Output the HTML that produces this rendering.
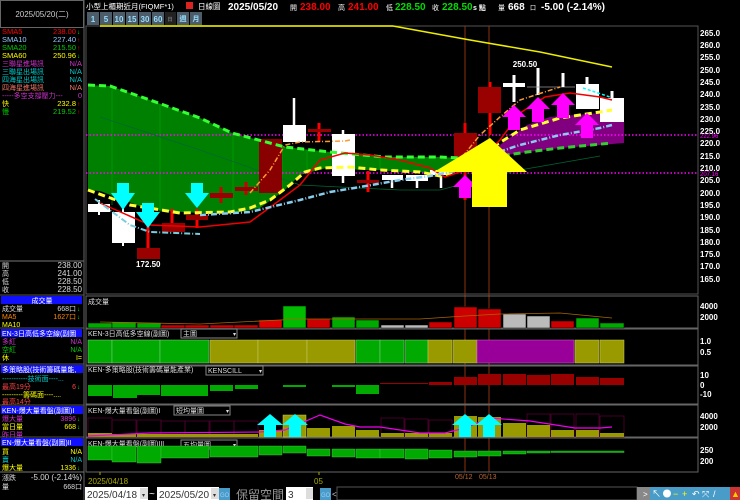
<!DOCTYPE html>
<html><head><meta charset="utf-8"><style>
html,body{margin:0;padding:0;background:#000;width:740px;height:500px;overflow:hidden}
svg{display:block}
text{font-family:"Liberation Sans","Noto Sans CJK TC",sans-serif}
.b{font-weight:bold}
</style></head><body>
<svg width="740" height="500" viewBox="0 0 740 500" xmlns="http://www.w3.org/2000/svg" font-size="8">
<rect width="740" height="500" fill="#000"/>
<rect x="0.5" y="0.5" width="83" height="27" fill="#000" stroke="#666"/>
<text x="42" y="17" fill="#ccc" text-anchor="middle">2025/05/20(二)</text>
<line x1="84" y1="0" x2="84" y2="500" stroke="#666"/>
<g font-size="7.5">
<text x="2" y="34" fill="#f00">SMA5</text><text x="76" y="34" fill="#f00" text-anchor="end">238.00</text><text x="77" y="34" fill="#0f0" font-size="6">↓</text>
<text x="2" y="42" fill="#9cf">SMA10</text><text x="76" y="42" fill="#9cf" text-anchor="end">227.40</text><text x="77" y="42" fill="#f00" font-size="6">↑</text>
<text x="2" y="50" fill="#0c0">SMA20</text><text x="76" y="50" fill="#0c0" text-anchor="end">215.50</text><text x="77" y="50" fill="#f00" font-size="6">↑</text>
<text x="2" y="58" fill="#ff0">SMA60</text><text x="76" y="58" fill="#ff0" text-anchor="end">250.96</text><text x="77" y="58" fill="#0f0" font-size="6">↓</text>
<text x="2" y="66" fill="#c3c" font-size="7">三聯星進場訊</text><text x="82" y="66" fill="#c3c" text-anchor="end">N/A</text>
<text x="2" y="74" fill="#0cc" font-size="7">三聯星出場訊</text><text x="82" y="74" fill="#0cc" text-anchor="end">N/A</text>
<text x="2" y="82" fill="#0cc" font-size="7">四海星出場訊</text><text x="82" y="82" fill="#0cc" text-anchor="end">N/A</text>
<text x="2" y="90" fill="#e76" font-size="7">四海星進場訊</text><text x="82" y="90" fill="#e76" text-anchor="end">N/A</text>
<text x="2" y="98" fill="#c3c" font-size="7">-----多空支撐壓力---</text><text x="82" y="98" fill="#c3c" text-anchor="end">0</text>
<text x="2" y="106" fill="#ff0" font-size="7">快</text><text x="76" y="106" fill="#ff0" text-anchor="end">232.8</text><text x="77" y="106" fill="#f00" font-size="6">↑</text>
<text x="2" y="114" fill="#0c0" font-size="7">慢</text><text x="76" y="114" fill="#0c0" text-anchor="end">219.52</text><text x="77" y="114" fill="#f00" font-size="6">↑</text>
</g>
<line x1="0" y1="261" x2="84" y2="261" stroke="#777"/>
<g font-size="7">
<text x="2" y="268" fill="#ddd">開</text><text x="82" y="268" fill="#ddd" text-anchor="end" font-size="8">238.00</text>
<text x="2" y="276" fill="#ddd">高</text><text x="82" y="276" fill="#ddd" text-anchor="end" font-size="8">241.00</text>
<text x="2" y="284" fill="#ddd">低</text><text x="82" y="284" fill="#ddd" text-anchor="end" font-size="8">228.50</text>
<text x="2" y="292" fill="#ddd">收</text><text x="82" y="292" fill="#ddd" text-anchor="end" font-size="8">228.50</text>
<rect x="1" y="296" width="81" height="8" fill="#1010ff"/><text x="42" y="303" fill="#fff" text-anchor="middle">成交量</text>
<text x="2" y="311" fill="#ddd">成交量</text><text x="76" y="311" fill="#ddd" text-anchor="end">668口</text><text x="77" y="311" fill="#0f0" font-size="6">↓</text>
<text x="2" y="319" fill="#f80">MA5</text><text x="76" y="319" fill="#f80" text-anchor="end">1627口</text><text x="77" y="319" fill="#0f0" font-size="6">↓</text>
<text x="2" y="327" fill="#ff0">MA10</text>
<rect x="1" y="329" width="81" height="8" fill="#1010ff"/><text x="2" y="336" fill="#fff">EN-3日高低多空線(副圖</text>
<text x="2" y="344" fill="#c3c">多紅</text><text x="82" y="344" fill="#c3c" text-anchor="end">N/A</text>
<text x="2" y="352" fill="#0c0">空紅</text><text x="82" y="352" fill="#0c0" text-anchor="end">N/A</text>
<text x="2" y="360" fill="#ff0">休</text><text x="82" y="360" fill="#ff0" text-anchor="end">I=</text>
<rect x="1" y="365" width="82" height="8" fill="#1010ff"/><text x="2" y="372" fill="#fff">多策略股(技術籌碼量能,</text>
<text x="2" y="381" fill="#0cc">-----------技術面----...</text>
<text x="2" y="389" fill="#f44">最高19分</text><text x="76" y="389" fill="#f44" text-anchor="end">6</text><text x="77" y="389" fill="#0f0" font-size="6">↓</text>
<text x="2" y="397" fill="#ff0">---------籌碼面----....</text>
<text x="2" y="404" fill="#f44">最高14分</text>
<rect x="1" y="406" width="82" height="8" fill="#1010ff"/><text x="2" y="413" fill="#fff">KEN-爆大量看盤(副圖)I</text>
<text x="2" y="421" fill="#c3c">爆大量</text><text x="76" y="421" fill="#c3c" text-anchor="end">3896</text><text x="77" y="421" fill="#0f0" font-size="6">↓</text>
<text x="2" y="429" fill="#ff0">當日量</text><text x="76" y="429" fill="#ff0" text-anchor="end">668</text><text x="77" y="429" fill="#0f0" font-size="6">↓</text>
<text x="2" y="437" fill="#c3c">昨日量</text>
<rect x="1" y="438" width="82" height="8" fill="#1010ff"/><text x="2" y="445" fill="#fff">EN-爆大量看盤(副圖)II</text>
<text x="2" y="454" fill="#ff0">買</text><text x="82" y="454" fill="#ff0" text-anchor="end">N/A</text>
<text x="2" y="462" fill="#0cc">賣</text><text x="82" y="462" fill="#0cc" text-anchor="end">N/A</text>
<text x="2" y="470" fill="#ff0">爆大量</text><text x="76" y="470" fill="#ff0" text-anchor="end">1336</text><text x="77" y="470" fill="#0f0" font-size="6">↓</text>
<text x="2" y="480" fill="#ddd">漲跌</text><text x="82" y="480" fill="#ddd" text-anchor="end" font-size="8">-5.00 (-2.14%)</text>
<text x="2" y="489" fill="#ddd">量</text><text x="82" y="489" fill="#ddd" text-anchor="end">668口</text>
</g>
<line x1="0" y1="472" x2="84" y2="472" stroke="#777"/>
<g stroke="#555"><line x1="0" y1="295" x2="84" y2="295"/><line x1="0" y1="328" x2="84" y2="328"/><line x1="0" y1="364" x2="84" y2="364"/><line x1="0" y1="405" x2="84" y2="405"/><line x1="0" y1="437" x2="84" y2="437"/></g>

<!-- header -->
<text x="86" y="9" fill="#fff" font-size="7.5">小型上櫃期近月(FIQMF*1)</text>
<rect x="186" y="2" width="7" height="7" fill="#d22"/>
<text x="198" y="9" fill="#fff" font-size="7.5">日線圖</text>
<text x="228" y="10" fill="#fff" class="b" font-size="10">2025/05/20</text>
<text x="290" y="10" fill="#fff" font-size="7">開</text><text x="300" y="10" fill="#f00" class="b" font-size="10">238.00</text>
<text x="338" y="10" fill="#fff" font-size="7">高</text><text x="348" y="10" fill="#f00" class="b" font-size="10">241.00</text>
<text x="386" y="10" fill="#fff" font-size="7">低</text><text x="395" y="10" fill="#0d0" class="b" font-size="10">228.50</text>
<text x="432" y="10" fill="#fff" font-size="7">收</text><text x="442" y="10" fill="#0d0" class="b" font-size="10">228.50</text>
<text x="473" y="10" fill="#fff" class="b" font-size="7">s 點</text>
<text x="498" y="10" fill="#fff" font-size="7">量</text><text x="508" y="10" fill="#fff" class="b" font-size="10">668</text><text x="530" y="10" fill="#fff" font-size="6">口</text>
<text x="541" y="10" fill="#fff" class="b" font-size="10">-5.00 (-2.14%)</text>
<g font-size="8" fill="#9df" class="b">
<rect x="87" y="12" width="12" height="13" fill="#4c5c68"/><text x="93" y="22" text-anchor="middle">1</text>
<rect x="100" y="12" width="12" height="13" fill="#4c5c68"/><text x="106" y="22" text-anchor="middle">5</text>
<rect x="113" y="12" width="12" height="13" fill="#4c5c68"/><text x="119" y="22" text-anchor="middle">10</text>
<rect x="126" y="12" width="12" height="13" fill="#4c5c68"/><text x="132" y="22" text-anchor="middle">15</text>
<rect x="139" y="12" width="12" height="13" fill="#4c5c68"/><text x="145" y="22" text-anchor="middle">30</text>
<rect x="152" y="12" width="12" height="13" fill="#4c5c68"/><text x="158" y="22" text-anchor="middle">60</text>
<rect x="165" y="12" width="11" height="13" fill="#222"/><text x="170" y="21" text-anchor="middle" fill="#777" font-size="5">日</text>
<rect x="177" y="12" width="12" height="13" fill="#4c5c68"/><text x="183" y="21" text-anchor="middle" font-size="7">週</text>
<rect x="190" y="12" width="12" height="13" fill="#4c5c68"/><text x="196" y="21" text-anchor="middle" font-size="7">月</text>
</g>
<rect x="86" y="26" width="612" height="268" fill="none" stroke="#555"/>
<line x1="100" y1="26" x2="393" y2="26" stroke="#ff0" stroke-width="1.5"/>

<polygon points="88,85 110,86 150,100 200,118 232,133 285,147 330,152 385,157 440,157 460,158 470,160 450,170 440,175 420,172 400,172 380,170 360,170 330,167 300,175 285,190 260,208 240,212 200,213 150,210 100,191 88,190" fill="#008000"/>
<g stroke="#0a0" stroke-width="0.6"><line x1="112" y1="87" x2="112" y2="205"/><line x1="160" y1="104" x2="160" y2="212"/><line x1="233" y1="133" x2="233" y2="212"/><line x1="282" y1="146" x2="282" y2="192"/><line x1="307" y1="150" x2="307" y2="172"/><line x1="380" y1="157" x2="380" y2="170"/></g>
<polygon points="478,160 500,145 527,125 550,117 575,115 600,113 624,113 624,143 600,145 560,148 527,152 500,156 478,160" fill="#800080"/>
<line x1="86" y1="135" x2="698" y2="135" stroke="#f0f" stroke-width="1.5" stroke-dasharray="1.5,2"/>
<line x1="86" y1="173" x2="698" y2="173" stroke="#f0f" stroke-width="1.5" stroke-dasharray="1.5,2"/>
<line x1="465" y1="26" x2="465" y2="472" stroke="#8b3010" stroke-width="1"/>
<line x1="489" y1="26" x2="489" y2="472" stroke="#8b3010" stroke-width="1"/>
<polyline points="393,26 470,40 540,52 612,67" fill="none" stroke="#ee0" stroke-width="1.5"/>
<polyline points="100,117 200,150 300,185 400,190 440,190 470,182 520,170 560,163 600,156" fill="none" stroke="#063" stroke-width="0.8"/>
<g>
<rect x="88" y="204" width="22" height="8" fill="#fff"/><line x1="99" y1="200" x2="99" y2="215" stroke="#fff" stroke-width="2"/>
<line x1="123" y1="205" x2="123" y2="246" stroke="#fff" stroke-width="2"/><rect x="112" y="212" width="23" height="31" fill="#fff"/>
<line x1="148" y1="225" x2="148" y2="250" stroke="#f00" stroke-width="3"/><rect x="137" y="248" width="23" height="11" fill="#900"/>
<line x1="172" y1="209" x2="172" y2="224" stroke="#f00" stroke-width="3"/><rect x="162" y="223" width="23" height="9" fill="#900"/>
<line x1="197" y1="209" x2="197" y2="228" stroke="#f00" stroke-width="3"/><rect x="186" y="215" width="22" height="5" fill="#900"/>
<line x1="221" y1="187" x2="221" y2="203" stroke="#c00" stroke-width="3"/><rect x="210" y="193" width="23" height="5" fill="#900"/>
<line x1="246" y1="182" x2="246" y2="195" stroke="#c00" stroke-width="3"/><rect x="235" y="187" width="23" height="4" fill="#900"/>
<rect x="259" y="139" width="23" height="54" fill="#800"/>
<line x1="294" y1="98" x2="294" y2="128" stroke="#fff" stroke-width="2.5"/><rect x="283" y="125" width="23" height="17" fill="#fff"/>
<line x1="319" y1="123" x2="319" y2="142" stroke="#f00" stroke-width="3"/><rect x="308" y="129" width="23" height="3" fill="#900"/>
<line x1="343" y1="130" x2="343" y2="183" stroke="#fff" stroke-width="2.5"/><rect x="332" y="134" width="23" height="42" fill="#fff"/>
<line x1="368" y1="171" x2="368" y2="192" stroke="#f00" stroke-width="3"/><rect x="357" y="180" width="22" height="3" fill="#900"/>
<line x1="392" y1="175" x2="392" y2="188" stroke="#fff" stroke-width="2.5"/><rect x="382" y="175" width="21" height="5" fill="#fff"/>
<line x1="417" y1="175" x2="417" y2="188" stroke="#fff" stroke-width="2.5"/><rect x="406" y="175" width="22" height="6" fill="#fff"/>
<line x1="441" y1="170" x2="441" y2="188" stroke="#fff" stroke-width="2.5"/><rect x="430" y="170" width="22" height="5" fill="#fff"/>
<line x1="465" y1="123" x2="465" y2="200" stroke="#e00" stroke-width="3"/><rect x="454" y="133" width="23" height="24" fill="#900"/>
<line x1="490" y1="82" x2="490" y2="135" stroke="#f00" stroke-width="3"/><rect x="478" y="87" width="23" height="26" fill="#900"/>
<line x1="514" y1="75" x2="514" y2="102" stroke="#fff" stroke-width="3"/><rect x="503" y="83" width="22" height="4" fill="#fff"/>
<line x1="538" y1="68" x2="538" y2="95" stroke="#fff" stroke-width="3"/><line x1="527" y1="87" x2="575" y2="87" stroke="#999" stroke-width="0.7"/>
<line x1="563" y1="73" x2="563" y2="87" stroke="#fff" stroke-width="3"/>
<line x1="587" y1="77" x2="587" y2="86" stroke="#fff" stroke-width="3"/><rect x="576" y="84" width="23" height="25" fill="#fff"/>
<line x1="612" y1="91" x2="612" y2="99" stroke="#fff" stroke-width="3"/><rect x="600" y="98" width="24" height="24" fill="#fff"/>
</g>
<text x="136" y="267" fill="#fff" class="b">172.50</text>
<text x="525" y="67" fill="#fff" class="b" text-anchor="middle">250.50</text>
<polyline points="88,85 110,86 150,100 200,118 232,133 285,147 330,152 385,157 440,157 460,158 470,160" fill="none" stroke="#3f3" stroke-width="3" stroke-dasharray="7,4"/>
<polyline points="470,160 500,156 527,152 560,148 612,143" fill="none" stroke="#3c3" stroke-width="3" stroke-dasharray="7,4"/>
<polyline points="88,190 130,205 180,213 230,212 250,208 270,200 290,185 305,172 320,168 350,167 380,170 420,172 440,176 455,172 480,155 520,130 560,118 600,112 612,110" fill="none" stroke="#ff3" stroke-width="3" stroke-dasharray="7,4"/>
<polyline points="100,203 150,225 200,227 250,222 280,200 300,185 320,160 345,153 370,155 400,160 430,168 445,177 460,172 480,160 500,140 520,113 545,97 570,93 600,97 612,100" fill="none" stroke="#e00" stroke-width="1.5"/>
<polyline points="95,199 130,225 150,232 200,234" fill="none" stroke="#7cd" stroke-width="2" stroke-dasharray="6,2,1,2"/>
<polyline points="200,215 250,212 300,200 330,192 360,187 400,180 430,176 460,170 480,158 520,145 560,135 600,128 612,125" fill="none" stroke="#8ce" stroke-width="2.5" stroke-dasharray="6,2,1,2"/>
<polyline points="250,193 270,170 285,145 300,142 345,141 350,140" fill="none" stroke="#f93" stroke-width="1.5" stroke-dasharray="5,2,1,2"/>
<polyline points="450,172 480,135 500,117 520,100 560,87" fill="none" stroke="#f93" stroke-width="1.5" stroke-dasharray="5,2,1,2"/>
<polyline points="583,88 610,97" fill="none" stroke="#0ff" stroke-width="1.5" stroke-dasharray="3,2"/>
<g fill="#0ff">
<polygon points="117,183 129,183 129,193 135,193 123,210 111,193 117,193"/>
<polygon points="142,203 154,203 154,212 160,212 148,228 136,212 142,212"/>
<polygon points="191,183 203,183 203,193 209,193 197,208 185,193 191,193"/>
</g>
<g fill="#f0f">
<polygon points="465,175 477,187 471,187 471,198 459,198 459,187 453,187"/>
<polygon points="514,105 526,117 520,117 520,130 508,130 508,117 502,117"/>
<polygon points="538,97 550,109 544,109 544,122 532,122 532,109 526,109"/>
<polygon points="563,93 575,105 569,105 569,118 557,118 557,105 551,105"/>
<polygon points="587,113 599,125 593,125 593,138 581,138 581,125 575,125"/>
</g>
<polygon points="490,138 527,172 507,172 507,207 472,207 472,172 434,172" fill="#ff0"/>
<g fill="#fff" class="b" font-size="8">
<text x="700" y="36">265.0</text><text x="700" y="48">260.0</text><text x="700" y="60">255.0</text><text x="700" y="73">250.0</text><text x="700" y="85">245.0</text><text x="700" y="97">240.0</text><text x="700" y="110">235.0</text><text x="700" y="122">230.0</text><text x="700" y="134">225.0</text><text x="700" y="146">220.0</text><text x="700" y="159">215.0</text><text x="700" y="171">210.0</text><text x="700" y="183">205.0</text><text x="700" y="196">200.0</text><text x="700" y="208">195.0</text><text x="700" y="220">190.0</text><text x="700" y="233">185.0</text><text x="700" y="245">180.0</text><text x="700" y="257">175.0</text><text x="700" y="269">170.0</text><text x="700" y="282">165.0</text>
</g>
<text x="700" y="138" fill="#f0f" font-size="6">222.96</text>
<text x="700" y="176" fill="#f0f" font-size="6">207.16</text>

<g fill="none" stroke="#666">
<rect x="86" y="296" width="612" height="32"/>
<rect x="86" y="329" width="612" height="36"/>
<rect x="86" y="366" width="612" height="38"/>
<rect x="86" y="405" width="612" height="32"/>
<rect x="86" y="438" width="612" height="34"/>
</g>
<text x="88" y="304" fill="#ddd" font-size="7">成交量</text>
<g stroke="#000" stroke-width="0.5">
<rect x="88" y="323" width="24" height="5" fill="#0a0"/><rect x="112" y="322" width="24" height="6" fill="#0a0"/><rect x="137" y="323" width="24" height="5" fill="#0a0"/>
<rect x="161" y="325" width="24" height="3" fill="#c00"/><rect x="185" y="325" width="24" height="3" fill="#c00"/><rect x="210" y="325" width="24" height="3" fill="#c00"/><rect x="234" y="325" width="24" height="3" fill="#c00"/>
<rect x="259" y="320" width="23" height="8" fill="#d00"/><rect x="283" y="306" width="23" height="22" fill="#0b0"/><rect x="307" y="319" width="23" height="9" fill="#c00"/><rect x="332" y="317" width="23" height="11" fill="#0a0"/><rect x="356" y="320" width="23" height="8" fill="#0a0"/>
<rect x="381" y="325" width="23" height="3" fill="#bbb"/><rect x="405" y="325" width="23" height="3" fill="#bbb"/><rect x="429" y="322" width="23" height="6" fill="#c00"/>
<rect x="454" y="307" width="23" height="21" fill="#c00"/><rect x="478" y="309" width="23" height="19" fill="#c00"/><rect x="503" y="314" width="23" height="14" fill="#bbb"/><rect x="527" y="316" width="23" height="12" fill="#bbb"/><rect x="551" y="321" width="23" height="7" fill="#c00"/><rect x="576" y="318" width="23" height="10" fill="#0a0"/><rect x="600" y="323" width="24" height="5" fill="#0a0"/>
</g>
<polyline points="100,322 200,324 300,319 420,319 465,316 500,314 560,313 612,318" fill="none" stroke="#a60" stroke-width="0.8"/>
<g fill="#fff" class="b"><text x="700" y="309">4000</text><text x="700" y="320">2000</text></g>
<text x="88" y="336" fill="#ddd" font-size="7">KEN-3日高低多空線(副圖)</text>
<rect x="181" y="329" width="56" height="9" fill="#000" stroke="#888"/><text x="183" y="336" fill="#ddd" font-size="7">主圖</text><text x="233" y="336" fill="#ddd" font-size="6">▾</text>
<g stroke="#8c8" stroke-width="0.5">
<rect x="88" y="340" width="24" height="23" fill="#0a0"/><rect x="112" y="340" width="48" height="23" fill="#0a0"/><rect x="160" y="340" width="49" height="23" fill="#0a0"/>
<rect x="210" y="340" width="48" height="23" fill="#990" stroke="#cc6"/><rect x="258" y="340" width="49" height="23" fill="#990" stroke="#cc6"/><rect x="307" y="340" width="48" height="23" fill="#990" stroke="#cc6"/>
<rect x="356" y="340" width="24" height="23" fill="#0a0"/><rect x="380" y="340" width="24" height="23" fill="#0a0"/><rect x="405" y="340" width="23" height="23" fill="#0a0"/>
<rect x="428" y="340" width="24" height="23" fill="#990" stroke="#cc6"/><rect x="453" y="340" width="24" height="23" fill="#990" stroke="#cc6"/>
<rect x="477" y="340" width="97" height="23" fill="#909" stroke="#c6c"/>
<rect x="575" y="340" width="24" height="23" fill="#990" stroke="#cc6"/><rect x="600" y="340" width="24" height="23" fill="#990" stroke="#cc6"/>
</g>
<g fill="#fff" class="b"><text x="700" y="344">1.0</text><text x="700" y="355">0.5</text></g>
<text x="88" y="372" fill="#ddd" font-size="7">KEN-多策略股(技術籌碼量能產業)</text>
<rect x="206" y="366" width="57" height="9" fill="#000" stroke="#888"/><text x="208" y="373" fill="#ddd" font-size="7">KENSCILL</text><text x="259" y="373" fill="#ddd" font-size="6">▾</text>
<g>
<rect x="88" y="385" width="24" height="11" fill="#0a0"/><rect x="113" y="385" width="24" height="13" fill="#0a0"/><rect x="137" y="385" width="23" height="10" fill="#0a0"/><rect x="161" y="385" width="47" height="11" fill="#0a0"/>
<rect x="210" y="385" width="23" height="6" fill="#0a0"/><rect x="235" y="385" width="23" height="4" fill="#0a0"/><rect x="283" y="385" width="23" height="2" fill="#0a0"/><rect x="332" y="385" width="23" height="2" fill="#0a0"/><rect x="356" y="385" width="23" height="9" fill="#0a0"/>
<rect x="380" y="383" width="48" height="1" fill="#900"/>
<rect x="429" y="382" width="23" height="3" fill="#900"/><rect x="454" y="377" width="23" height="8" fill="#900"/><rect x="478" y="374" width="23" height="11" fill="#900"/><rect x="503" y="374" width="23" height="11" fill="#900"/><rect x="527" y="375" width="23" height="10" fill="#900"/><rect x="551" y="374" width="23" height="11" fill="#900"/><rect x="576" y="377" width="23" height="8" fill="#900"/><rect x="600" y="378" width="24" height="7" fill="#900"/>
</g>
<g fill="#fff" class="b"><text x="700" y="378">10</text><text x="700" y="388">0</text><text x="700" y="397">-10</text></g>
<text x="88" y="413" fill="#ddd" font-size="7">KEN-爆大量看盤(副圖)I</text>
<rect x="174" y="406" width="56" height="9" fill="#000" stroke="#888"/><text x="176" y="413" fill="#ddd" font-size="7">短均量圖</text><text x="226" y="413" fill="#ddd" font-size="6">▾</text>
<g fill="none" stroke="#503" stroke-width="0.8">
<rect x="88" y="418" width="24" height="19"/><rect x="112" y="420" width="24" height="17"/><rect x="137" y="420" width="24" height="17"/><rect x="161" y="421" width="24" height="16"/><rect x="185" y="421" width="24" height="16"/><rect x="210" y="421" width="24" height="16"/><rect x="234" y="421" width="24" height="16"/>
<rect x="381" y="418" width="23" height="19"/><rect x="405" y="419" width="23" height="18"/><rect x="429" y="420" width="23" height="17"/><rect x="527" y="414" width="23" height="23"/><rect x="551" y="414" width="23" height="23"/><rect x="576" y="414" width="23" height="23"/><rect x="600" y="416" width="24" height="21"/>
</g>
<g fill="#990">
<rect x="88" y="433" width="24" height="4"/><rect x="112" y="434" width="24" height="3"/><rect x="137" y="434" width="24" height="3"/><rect x="161" y="434" width="97" height="3"/>
<rect x="259" y="430" width="23" height="7"/><rect x="283" y="415" width="23" height="22" stroke="#cc6" stroke-width="0.5"/><rect x="307" y="428" width="23" height="9"/><rect x="332" y="426" width="23" height="11"/><rect x="356" y="430" width="23" height="7"/>
<rect x="381" y="433" width="23" height="4"/><rect x="405" y="433" width="23" height="4"/><rect x="429" y="433" width="23" height="4"/>
<rect x="454" y="416" width="23" height="21"/><rect x="478" y="417" width="23" height="20"/><rect x="503" y="423" width="23" height="14"/><rect x="527" y="425" width="23" height="12"/><rect x="551" y="430" width="23" height="7"/><rect x="576" y="430" width="23" height="7"/><rect x="600" y="433" width="24" height="4"/>
</g>
<polyline points="88,436 150,433 260,432 285,430 320,415 345,424 360,427 380,427 420,433 445,433 465,428 490,418 530,421 575,428 600,428 612,427" fill="none" stroke="#e0e" stroke-width="1.2"/>
<g fill="#0ff">
<polygon points="270,414 283,425 276,425 276,437 264,437 264,425 257,425"/>
<polygon points="295,414 308,425 301,425 301,437 289,437 289,425 282,425"/>
<polygon points="465,414 478,425 471,425 471,437 459,437 459,425 452,425"/>
<polygon points="489,414 502,425 495,425 495,437 483,437 483,425 476,425"/>
</g>
<g fill="#fff" class="b"><text x="700" y="419">4000</text><text x="700" y="430">2000</text></g>
<text x="88" y="446" fill="#ddd" font-size="7">KEN-爆大量看盤(副圖)III</text>
<rect x="181" y="440" width="56" height="9" fill="#000" stroke="#888"/><text x="183" y="447" fill="#ddd" font-size="7">五均量圖</text><text x="233" y="447" fill="#ddd" font-size="6">▾</text>
<g fill="#0a0" stroke="#4c4" stroke-width="0.4">
<rect x="88" y="446" width="24" height="14"/><rect x="112" y="446" width="24" height="16"/><rect x="137" y="446" width="24" height="17"/><rect x="161" y="446" width="48" height="12"/><rect x="210" y="446" width="48" height="11"/><rect x="259" y="446" width="23" height="9"/><rect x="283" y="446" width="23" height="7"/><rect x="307" y="449" width="23" height="7"/><rect x="332" y="449" width="23" height="8"/><rect x="356" y="449" width="24" height="9"/>
<rect x="380" y="449" width="24" height="9"/><rect x="405" y="449" width="23" height="10"/><rect x="429" y="450" width="23" height="8"/><rect x="454" y="451" width="23" height="6"/><rect x="478" y="451" width="23" height="5"/><rect x="503" y="451" width="23" height="3"/><rect x="527" y="451" width="23" height="2"/><rect x="551" y="451" width="73" height="1.5"/>
</g>
<g fill="#fff" class="b"><text x="700" y="453">250</text><text x="700" y="464">200</text></g>
<line x1="100" y1="472" x2="100" y2="475" stroke="#aa0"/><line x1="319" y1="472" x2="319" y2="475" stroke="#aa0"/>
<text x="88" y="484" fill="#aa0">2025/04/18</text>
<text x="314" y="484" fill="#aa0">05</text>
<text x="455" y="479" fill="#b63" font-size="7">05/12</text><text x="479" y="479" fill="#b63" font-size="7">05/13</text>
<rect x="85" y="487" width="63" height="13" fill="#fff"/><text x="87" y="498" fill="#333" font-size="10">2025/04/18</text><rect x="140" y="488" width="8" height="11" fill="#ddd"/><text x="142" y="497" fill="#333" font-size="6">▾</text>
<text x="149" y="497" fill="#fff" font-size="10">~</text>
<rect x="157" y="487" width="62" height="13" fill="#fff"/><text x="159" y="498" fill="#333" font-size="10">2025/05/20</text><rect x="211" y="488" width="8" height="11" fill="#ddd"/><text x="213" y="497" fill="#333" font-size="6">▾</text>
<rect x="219" y="488" width="11" height="12" fill="#4a9cc8"/><text x="220" y="497" fill="#9cf" font-size="6">GO</text>
<text x="236" y="499" fill="#999" font-size="12">保留空間</text>
<rect x="286" y="487" width="27" height="13" fill="#fff"/><text x="288" y="498" fill="#333" font-size="10">3</text><rect x="306" y="488" width="7" height="11" fill="#ddd"/>
<rect x="320" y="488" width="11" height="12" fill="#4a9cc8"/><text x="321" y="497" fill="#9cf" font-size="6">GO</text>
<text x="332" y="497" fill="#ccc" font-size="8">&lt;</text>
<rect x="337" y="487" width="300" height="13" fill="#000" stroke="#555"/>
<rect x="637" y="487" width="13" height="13" fill="#888"/><text x="643" y="497" fill="#fff" font-size="8">&gt;</text>
<rect x="650" y="487" width="80" height="13" fill="#4a9cc8"/>
<g fill="#fff" font-size="9"><text x="652" y="497">↖</text><circle cx="667" cy="493.5" r="4"/><text x="673" y="497" fill="#ff0">−</text><text x="682" y="497" fill="#ff0">+</text><text x="692" y="497">↶</text><text x="702" y="497">⤧</text><text x="713" y="497">/</text></g>
<rect x="730" y="487" width="10" height="13" fill="#c33"/><text x="731" y="497" fill="#fc0" font-size="9">▲</text>
</svg>
</body></html>
